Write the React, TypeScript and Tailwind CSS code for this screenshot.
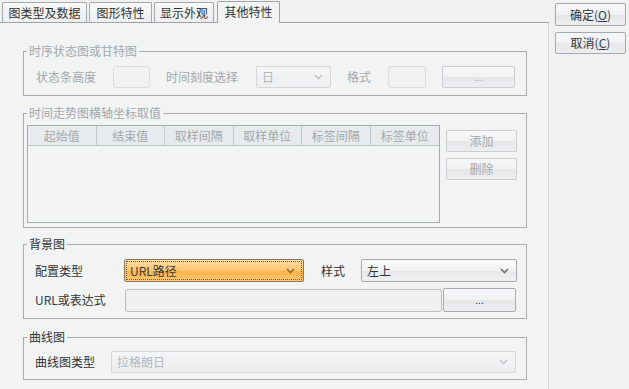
import React from "react"

const FONT = "font-['Noto_Sans_CJK_SC','Liberation_Sans',sans-serif]"
const DIS = "text-[#a4a8ac]"
const ON = "text-[#333]"

function Chevron({ color = "#6f7478" }: { color?: string }) {
  return (
    <svg width="9" height="6" viewBox="0 0 9 6" className="shrink-0">
      <path d="M1 1 L4.5 4.5 L8 1" fill="none" stroke={color} strokeWidth="1.6" />
    </svg>
  )
}

function Btn({ label, w, h = 22, disabled, className = "" }: { label: React.ReactNode; w: number; h?: number; disabled?: boolean; className?: string }) {
  return (
    <div
      className={`flex items-center justify-center rounded-[2px] border text-[12px] leading-none ${
        disabled ? "border-[#c9ced2] text-[#a4a8ac]" : "border-[#a3a9ae] text-[#333]"
      } bg-[linear-gradient(#f6f7f8,#f0f1f2_50%,#e4e6e8_51%,#eceef0)] ${className}`}
      style={{ width: w, height: h }}
    >
      {label}
    </div>
  )
}

function Select({ text, w, h = 22, disabled, className = "" }: { text: string; w: number; h?: number; disabled?: boolean; className?: string }) {
  return (
    <div
      className={`flex items-center justify-between rounded-[2px] border pl-[5px] pr-[7px] text-[12px] leading-none ${
        disabled ? "border-[#d3d7da] text-[#b2b6ba] bg-[linear-gradient(#f4f5f6,#eceef0)]" : "border-[#a3a9ae] text-[#333] bg-[linear-gradient(#f9fafa,#f1f2f3_50%,#e6e8ea_51%,#eef0f1)]"
      } ${className}`}
      style={{ width: w, height: h }}
    >
      <span>{text}</span>
      <Chevron color={disabled ? "#c2c6c9" : "#6a6f73"} />
    </div>
  )
}

function Input({ w, h = 22, disabled, className = "" }: { w: number; h?: number; disabled?: boolean; className?: string }) {
  return (
    <div
      className={`rounded-[3px] border ${disabled ? "border-[#d9dcde] bg-[#f0f1f1]" : "border-[#b7bdc1] bg-[#eff1f1]"} ${className}`}
      style={{ width: w, height: h }}
    />
  )
}

function Group({ title, disabled, className = "", children }: { title: string; disabled?: boolean; className?: string; children: React.ReactNode }) {
  return (
    <fieldset className={`ml-[23px] w-[504px] border border-[#a9adb0] ${className}`}>
      <legend className={`ml-[3px] px-[2px] text-[12px] leading-[12px] ${disabled ? DIS : ON}`}>{title}</legend>
      {children}
    </fieldset>
  )
}

const cols = ["起始值", "结束值", "取样间隔", "取样单位", "标签间隔", "标签单位"]

export default function App() {
  return (
    <div className={`flex h-[389px] w-[629px] overflow-hidden bg-[#f0f1f1] ${FONT}`}>
      {/* left: tabs + panel */}
      <div className="flex w-[549px] flex-col bg-[#f2f3f3]">
        <div className="flex h-[23px] items-end gap-[2px] border-b border-[#9ea4a9] bg-[#f0f1f1] pl-[2px]">
          {[
            ["图类型及数据", 85],
            ["图形特性", 63],
            ["显示外观", 60],
          ].map(([t, w]) => (
            <div
              key={t as string}
              className="flex h-[20px] items-center justify-center rounded-t-[2px] border border-b-0 border-[#a3a9ae] bg-[linear-gradient(#f7f8f8,#eceef0)] text-[12px] leading-none text-[#333]"
              style={{ width: w as number }}
            >
              {t}
            </div>
          ))}
          <div className="relative -mb-px ml-px flex h-[22px] w-[63px] items-center justify-center rounded-t-[2px] border border-b-0 border-[#9ea4a9] bg-[#f2f3f3] pb-[2px] text-[12px] leading-none text-[#333]">
            其他特性
          </div>
        </div>

        <div className="flex flex-1 flex-col border-r border-[#d8dbdd]">
          <Group title="时序状态图或甘特图" disabled className="mt-[22px]">
            <div className="flex items-center pb-[7px] pl-[12px] pt-[9px] text-[12px] leading-none">
              <span className={`w-[60px] ${DIS}`}>状态条高度</span>
              <Input w={37} disabled className="ml-[17px]" />
              <span className={`ml-[16px] w-[72px] ${DIS}`}>时间刻度选择</span>
              <Select text="日" w={75} disabled className="ml-[18px]" />
              <span className={`ml-[16px] w-[24px] ${DIS}`}>格式</span>
              <Input w={38} disabled className="ml-[17px]" />
              <Btn label={<span className="text-[10px]">...</span>} w={73} disabled className="ml-[16px]" />
            </div>
          </Group>

          <Group title="时间走势图横轴坐标取值" disabled className="mt-[11px]">
            <div className="flex pb-[4px] pl-[3px] pt-[6px]">
              <div className="flex h-[98px] w-[413px] flex-col border border-[#a3abb0]">
                <div className="grid h-[20px] grid-cols-6 border-b border-[#bcc3c7] bg-[#e7ebed]">
                  {cols.map((c, i) => (
                    <div
                      key={c}
                      className={`flex items-center justify-center text-[12px] leading-none ${DIS} ${i < 5 ? "border-r border-[#c3c9cd]" : ""}`}
                    >
                      {c}
                    </div>
                  ))}
                </div>
                <div className="flex-1 bg-[#f2f3f3]" />
              </div>
              <div className="ml-[6px] mt-[5px] flex flex-col gap-[6px]">
                <Btn label="添加" w={71} disabled />
                <Btn label="删除" w={71} disabled />
              </div>
            </div>
          </Group>

          <Group title="背景图" className="mt-[10px]">
            <div className="flex flex-col gap-[6px] pb-[6px] pl-[11px] pt-[9px] text-[12px] leading-none">
              <div className="flex items-center">
                <span className={`w-[48px] ${ON}`}>配置类型</span>
                <div className="ml-[41px] flex h-[23px] w-[180px] items-center rounded-[2px] border border-[#8c7a62] bg-[linear-gradient(#ffdca8,#ffc66e_50%,#ffb347_55%,#ffc878)] p-[1px]">
                  <div className="flex h-full w-full items-center justify-between border border-dotted border-[#6e5a3e] pl-[3px] pr-[6px]">
                    <span className="text-[#3b3b3b]">URL路径</span>
                    <Chevron color="#8a6a3c" />
                  </div>
                </div>
                <span className={`ml-[17px] w-[24px] ${ON}`}>样式</span>
                <Select text="左上" w={156} h={23} className="ml-[16px]" />
              </div>
              <div className="flex items-center">
                <span className={`w-[72px] ${ON}`}>
                  <span className="text-[#2f3e55]">URL</span>或表达式
                </span>
                <Input w={317} h={23} className="ml-[18px] mt-px" />
                <Btn label={<span className="text-[10px]">...</span>} w={73} h={24} className="ml-[1px]" />
              </div>
            </div>
          </Group>

          <Group title="曲线图" className="mt-[12px]">
            <div className="flex items-center pb-[6px] pl-[11px] pt-[8px] text-[12px] leading-none">
              <span className={`w-[60px] ${ON}`}>曲线图类型</span>
              <Select text="拉格朗日" w={405} disabled className="ml-[16px]" />
            </div>
          </Group>
        </div>
      </div>

      {/* right: dialog buttons */}
      <div className="flex flex-col gap-[6px] pl-[6px] pt-[3px]">
        <Btn
          w={71}
          h={23}
          label={
            <span>
              确定<span className="text-[#2f3e55]">(<span className="underline">O</span>)</span>
            </span>
          }
          className="border-[#9aa1a7] bg-[linear-gradient(#f5f6f7,#eceef0_50%,#dfe2e5_51%,#e8eaec)]"
        />
        <Btn
          w={71}
          h={22}
          label={
            <span>
              取消<span className="text-[#2f3e55]">(<span className="underline">C</span>)</span>
            </span>
          }
          className="border-[#9aa1a7] bg-[linear-gradient(#f5f6f7,#eceef0_50%,#dfe2e5_51%,#e8eaec)]"
        />
      </div>
    </div>
  )
}
